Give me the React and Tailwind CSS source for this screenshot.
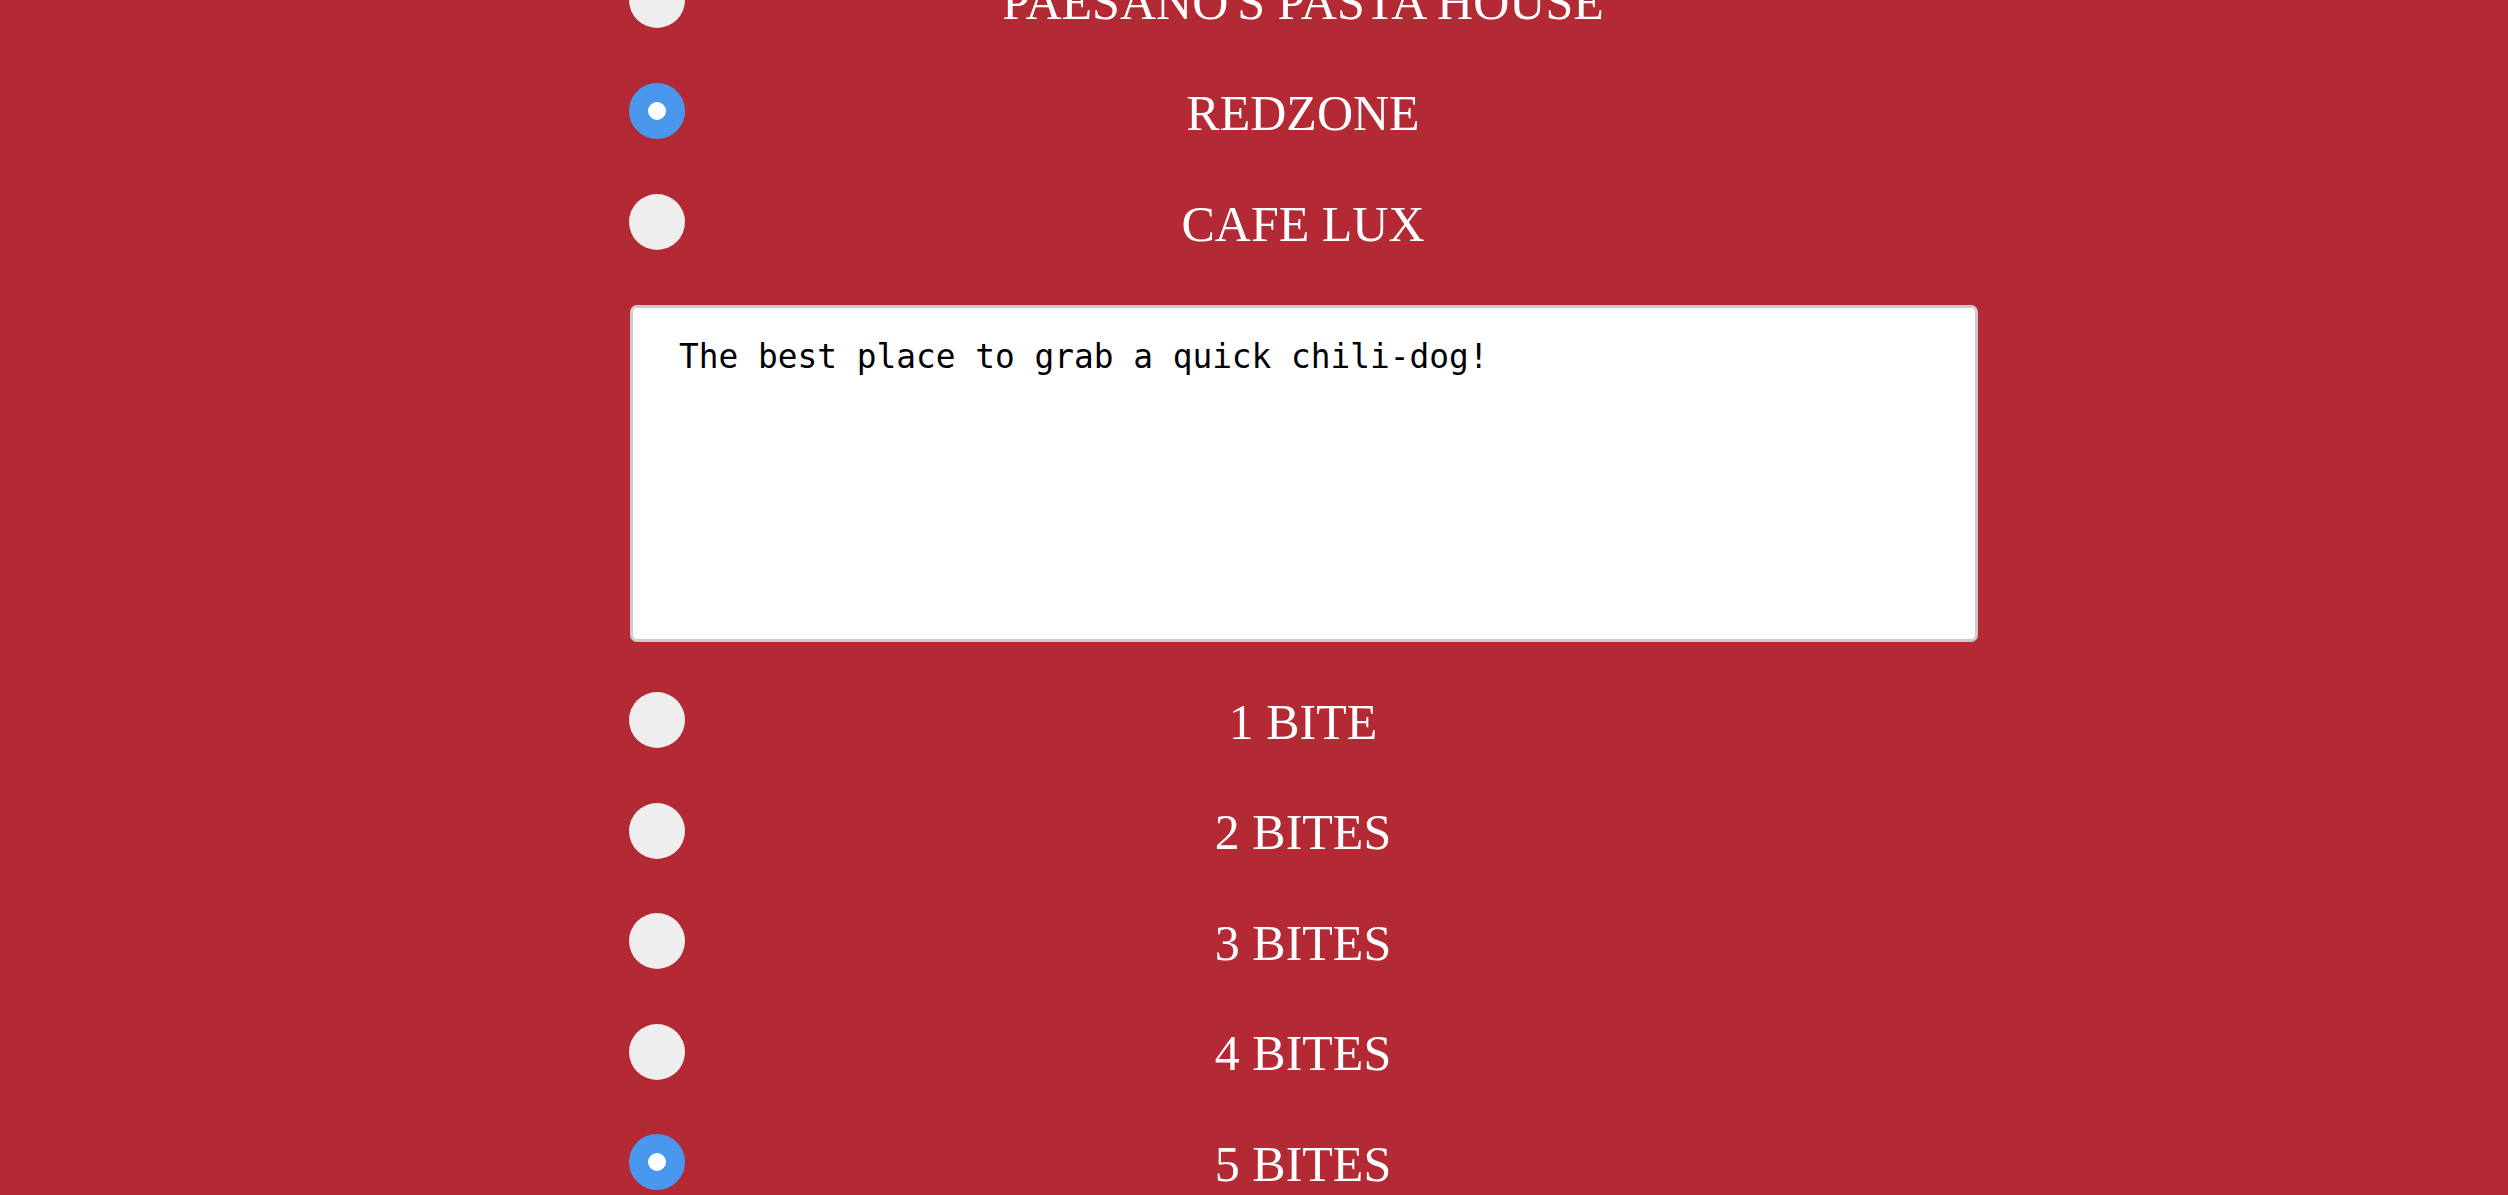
import { useState } from 'react';

const PLACES = ["PAESANO'S PASTA HOUSE", 'REDZONE', 'CAFE LUX'];
const RATINGS = ['1 BITE', '2 BITES', '3 BITES', '4 BITES', '5 BITES'];

function Radio({ checked }) {
  return checked ? (
    <span className="block w-[56px] h-[56px] rounded-full bg-white border-[19px] border-[#4a98ee] flex-shrink-0" />
  ) : (
    <span className="block w-[56px] h-[56px] rounded-full bg-[#eeeeee] flex-shrink-0" />
  );
}

function Option({ label, checked, onPick }) {
  return (
    <label onClick={onPick} className="flex items-center h-[56px] cursor-pointer">
      <Radio checked={checked} />
      <span className="flex-1 text-center pt-[4px] text-white text-[50px] leading-normal font-['Liberation_Serif','Times_New_Roman',serif]">
        {label}
      </span>
      <span className="w-[58px] flex-shrink-0" />
    </label>
  );
}

export default function App() {
  const [place, setPlace] = useState('REDZONE');
  const [rating, setRating] = useState('5 BITES');
  const [review, setReview] = useState('The best place to grab a quick chili-dog!');

  return (
    <div className="h-screen overflow-hidden bg-[#b32a34]">
      <div className="ml-[629px] w-[1350px] mt-[-28px] flex flex-col">
        {/* Restaurant */}
        <div className="flex flex-col gap-[55px]">
          {PLACES.map(p => (
            <Option key={p} label={p} checked={place === p} onPick={() => setPlace(p)} />
          ))}
        </div>

        {/* Review */}
        <textarea
          value={review}
          onChange={e => setReview(e.target.value)}
          className="mt-[55px] ml-[1px] w-[1348px] h-[337px] resize-none bg-white border-[3px] border-[#cccccc] rounded-[7px] pt-[25px] pl-[46px] pr-[46px] text-black text-[32.8px] leading-normal font-['DejaVu_Sans_Mono',monospace] outline-none"
        />

        {/* Rating */}
        <div className="mt-[50px] flex flex-col gap-[54.5px]">
          {RATINGS.map(r => (
            <Option key={r} label={r} checked={rating === r} onPick={() => setRating(r)} />
          ))}
        </div>
      </div>
    </div>
  );
}
